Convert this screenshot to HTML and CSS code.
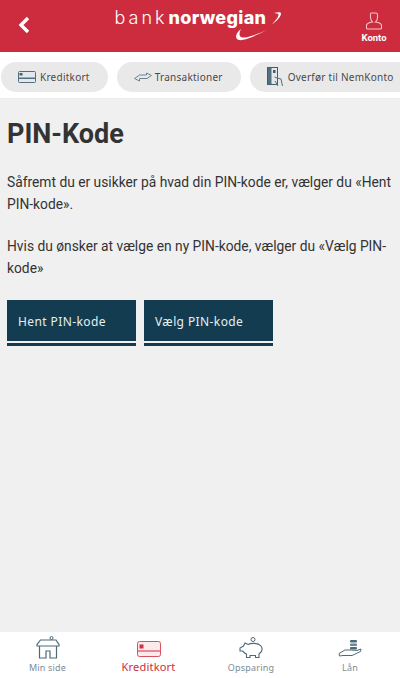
FILE: index.html
```html
<!DOCTYPE html>
<html lang="da">
    <head>
        <meta charset="UTF-8" />
        <meta name="viewport" content="width=device-width, initial-scale=1.0" />
        <title>PIN-Kode</title>
        <link rel="stylesheet" href="styles.css">
    </head>
    <body>
        <div class="app">
            <header class="top-bar">
                <svg class="back" width="14" height="18" viewBox="0 0 14 18">
                    <path d="M11 2 L4 9 L11 16" fill="none" stroke="#fff" stroke-width="3.4" />
                </svg>
                <div class="logo">
                    <div class="logo-text"><span class="logo-thin">bank</span><span class="logo-bold">norwegian</span></div>
                    <svg class="logo-swoosh-top" width="12" height="14" viewBox="0 0 12 14">
                        <path d="M4 1 C8 0 11 0 11 1.5 C11 4 8 8 2 12.5 C6 8 9 4 8.5 2.5 C8 1.5 6 1.2 4 1 Z" fill="#fff" />
                    </svg>
                    <svg class="logo-swoosh" width="34" height="14" viewBox="0 0 34 14">
                        <path d="M6 1 C1 5 0 9 2 11 C5 14 14 11 32 2 C18 8 9 11 6 9 C4 7.500 4 5 6 1 Z" fill="#fff" />
                    </svg>
                </div>
                <div class="account">
                    <svg width="18" height="18" viewBox="0 0 18 18">
                        <path d="M6 1 H11 Q12.500 1 12.500 2.500 V5.500 C12.500 7.500 11.500 9 10.500 10 C14 10.500 16.500 11 16.500 13.500 V16 Q16.500 17 15.500 17 H2.500 Q1.500 17 1.500 16 V13.500 C1.500 11 4 10.500 7.500 10 C6.500 9 5.500 7.500 5.500 5.500 V2.500 Q5.500 1 6 1 Z" fill="none" stroke="#f4c4cb" stroke-width="1.100" />
                    </svg>
                    <span>Konto</span>
                </div>
            </header>

            <nav class="tabs">
                <a class="tab">
                    <svg width="18" height="12" viewBox="0 0 18 12">
                        <rect x="0.500" y="0.500" width="17" height="11" rx="1" fill="#e4e8ea" stroke="#52707f" />
                        <rect x="1" y="6.500" width="16" height="1.500" fill="#52707f" />
                        <rect x="1.500" y="2" width="3" height="2.500" fill="#3f5f70" />
                    </svg>
                    Kreditkort
                </a>
                <a class="tab tab-trans">
                    <svg width="18" height="10" viewBox="0 0 18 10">
                        <path d="M5 3 H12.500 V1 L17.500 3.500 L13 6.500 H5.500 V9 L0.500 6.500 L5 3.500" fill="none" stroke="#6c8491" />
                    </svg>
                    Transaktioner
                </a>
                <a class="tab tab-transfer">
                    <svg width="16" height="20" viewBox="0 0 16 20">
                        <rect x="0.500" y="0.500" width="10" height="17" fill="#e4e8ea" stroke="#3f5f70" />
                        <rect x="1" y="1" width="3.500" height="16" fill="#52707f" />
                        <rect x="6" y="3" width="2.500" height="3" fill="#3f5f70" />
                        <path d="M7.500 10 L10 11 L14 12 L15.500 19 M11 19 L8 14" fill="none" stroke="#52707f" />
                    </svg>
                    Overfør til NemKonto
                </a>
            </nav>

            <main class="content">
                <h1>PIN-Kode</h1>
                <p>Såfremt du er usikker på hvad din PIN-kode er, vælger du «Hent PIN-kode».</p>
                <p>Hvis du ønsker at vælge en ny PIN-kode, vælger du «Vælg PIN-kode»</p>
                <div class="actions">
                    <a class="btn">Hent PIN-kode</a>
                    <a class="btn">Vælg PIN-kode</a>
                </div>
            </main>

            <footer class="bottom-nav">
                <a class="nav-item">
                    <svg width="24" height="23" viewBox="0 0 24 23">
                        <circle cx="15.500" cy="2" r="1.500" fill="none" stroke="#4d6a79" />
                        <path d="M3.500 10 V22 H10 V15 H14 V22 H20.500 V10 M1 10 V8.500 L4.500 4 H20 L23 8.500 V10 Z" fill="none" stroke="#4d6a79" stroke-width="1.200" />
                    </svg>
                    <span>Min side</span>
                </a>
                <a class="nav-item nav-active">
                    <svg width="24" height="16" viewBox="0 0 24 16">
                        <rect x="0.500" y="0.500" width="23" height="15" rx="2" fill="#fbe9eb" stroke="#d9515f" />
                        <rect x="1" y="9" width="22" height="2" fill="#e58b95" />
                        <rect x="2.500" y="3.500" width="4" height="4" fill="#d62f44" />
                    </svg>
                    <span>Kreditkort</span>
                </a>
                <a class="nav-item">
                    <svg width="24" height="22" viewBox="0 0 24 22">
                        <circle cx="14" cy="2.500" r="2" fill="none" stroke="#4d6a79" />
                        <path d="M6 6 L9 7.500 C12 6 19 5.500 22 9 C24 12 23 15 20 17 V20.500 H16.500 V18.500 H11 V20.500 H7.500 V17 C6 16.500 4.500 15 3.500 14 H1 L1 11 L4.500 9 Z" fill="none" stroke="#4d6a79" stroke-width="1.100" />
                    </svg>
                    <span>Opsparing</span>
                </a>
                <a class="nav-item">
                    <svg width="24" height="20" viewBox="0 0 24 20">
                        <rect x="12" y="1" width="7" height="2.500" rx="1" fill="#4d6a79" />
                        <rect x="12" y="4.500" width="7" height="2.500" rx="1" fill="#6c8491" />
                        <rect x="12" y="8" width="7" height="2.500" rx="1" fill="#4d6a79" />
                        <path d="M1 14.500 L7 11 H14 L19 11.500 L23 10 L22.500 12.500 L14 16.500 H5 L1.500 17 Z" fill="#fff" stroke="#4d6a79" />
                    </svg>
                    <span>Lån</span>
                </a>
            </footer>
        </div>
    </body>
</html>
```

FILE: styles.css
```css
* {
    box-sizing: border-box;
}

body {
    margin: 0;
    font-family: Roboto, "Liberation Sans", sans-serif;
    color: #333;
    background-color: #f0f0f0;
}

.app {
    display: flex;
    flex-direction: column;
    width: 400px;
    height: 678px;
    overflow: hidden;
}

.top-bar {
    display: flex;
    flex: none;
    align-items: center;
    justify-content: space-between;
    height: 52px;
    padding: 0 11px 0 17px;
    background-color: #cc2c3e;
    color: #fff;
}

.back {
    margin-bottom: 2px;
}

.logo {
    position: relative;
    width: 172px;
    height: 40px;
    margin: 0 0 3px 11px;
}

.logo-text {
    padding-top: 3px;
    font-family: Inter, "Liberation Sans", sans-serif;
    font-size: 18px;
    line-height: 20px;
    white-space: nowrap;
}

.logo-thin {
    margin-right: 1px;
    font-weight: 300;
    letter-spacing: 3px;
}

.logo-bold {
    font-weight: 800;
    letter-spacing: 0.300px;
}

.logo-swoosh-top {
    position: absolute;
    top: 7px;
    left: 155px;
}

.logo-swoosh {
    position: absolute;
    top: 23px;
    left: 120px;
}

.account {
    display: flex;
    flex-direction: column;
    align-items: center;
    gap: 2px;
    width: 30px;
    padding-top: 2px;
    font-size: 9.500px;
    font-weight: bold;
}

.tabs {
    display: flex;
    flex: none;
    gap: 9px;
    height: 47px;
    padding: 10px 0 0 1px;
    background-color: #fff;
    border-bottom: 1px solid #ececec;
    overflow: hidden;
}

.tab {
    display: flex;
    flex: none;
    align-items: center;
    gap: 4px;
    height: 30px;
    padding: 0 18px 0 17px;
    border-radius: 15px;
    background-color: #e9e9e9;
    color: #4a4a4a;
    font-family: "Noto Sans", sans-serif;
    font-size: 10px;
    letter-spacing: 0.250px;
}

.tab-trans {
    gap: 3px;
}

.tab-transfer {
    gap: 5px;
}

.content {
    flex: 1;
    padding: 19px 7px 0;
}

h1 {
    margin: 0 0 22px;
    font-size: 27px;
    line-height: 32px;
    font-weight: 700;
}

p {
    margin: 0 0 21px;
    font-size: 13.800px;
    line-height: 21.500px;
}

.actions {
    display: flex;
    gap: 8px;
}

.btn {
    display: flex;
    align-items: center;
    width: 129px;
    height: 41px;
    padding: 2px 11px 0;
    background-color: #143c50;
    box-shadow: 0 2px 0 #f0f0f0, 0 5px 0 #143c50;
    color: #e6eef2;
    font-family: "Noto Sans", sans-serif;
    font-size: 12px;
    letter-spacing: 0.400px;
}

.bottom-nav {
    display: grid;
    flex: none;
    grid-template-columns: 95px 107px 98px 100px;
    height: 46px;
    background-color: #fff;
}

.nav-item {
    display: flex;
    flex-direction: column;
    align-items: center;
    justify-content: flex-end;
    gap: 2px;
    padding-bottom: 4px;
    color: #7d8b93;
    font-family: "Noto Sans", sans-serif;
    font-size: 9px;
    letter-spacing: 0.200px;
}

.nav-active {
    color: #cc2c3e;
    font-size: 11px;
}
```
